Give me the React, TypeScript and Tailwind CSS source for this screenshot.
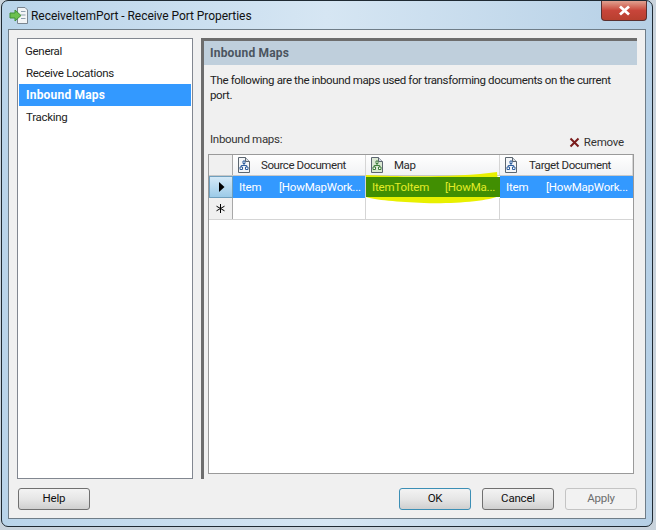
const ui = { fontFamily: 'Roboto, "Noto Sans", sans-serif' };

function DocIcon({ tone = 'blue' }: { tone?: 'blue' | 'green' }) {
  const c = tone === 'blue' ? '#2f5f9e' : '#3f7f3a';
  const paper = tone === 'blue' ? '#f4f6f8' : '#dbe8d4';
  return (
    <svg width="13" height="16" viewBox="0 0 13 16" className="shrink-0">
      <path d="M1.500 .5H8.500L12.500 4.500V15.500H1.500Z" fill={paper} stroke="#5c6670" />
      <path d="M8.500 .5V4.500H12.500" fill="#d5dbe2" stroke="#5c6670" />
      <path d="M6 4H8V6.500H6ZM3 10H5.500V12.500H3ZM8.500 10H11V12.500H8.500Z" fill="#fff" stroke={c} />
      <path d="M7 6.500V8.500M4.200 10V8.500H9.700V10" fill="none" stroke={c} />
    </svg>
  );
}

function HeaderCell({ label, tone, w, textLeft }: { label: string; tone?: 'blue' | 'green'; w: string; textLeft: string }) {
  return (
    <div className={`flex h-full items-center border-r border-[#d5d5d5] pl-[4px] ${w}`}>
      <DocIcon tone={tone} />
      <span className={`${textLeft} mt-[2px] text-[11.5px] tracking-[-0.42px] text-[#2a2a2a]`}>{label}</span>
    </div>
  );
}

function Btn({ label, kind }: { label: string; kind?: 'default' | 'disabled' }) {
  const tone =
    kind === 'disabled'
      ? 'border-[#c4c4c4] bg-[#f2f2f2] text-[#6d6d6d]'
      : kind === 'default'
        ? 'border-[#3c8fb5] bg-gradient-to-b from-[#f3f3f3] via-[#e6e6e6] to-[#cfcfcf] text-[#111]'
        : 'border-[#707070] bg-gradient-to-b from-[#f3f3f3] via-[#e6e6e6] to-[#cfcfcf] text-[#111]';
  return (
    <div className={`flex h-[22px] w-[72px] items-center justify-center rounded-[3px] border text-[11.5px] tracking-[-0.2px] ${tone}`}>
      {label}
    </div>
  );
}

export default function App() {
  return (
    <div className="h-[530px] w-[656px] overflow-hidden bg-[#c9d3dc]" style={ui}>
      <div className="mr-[3px] ml-[1px] flex h-[527px] flex-col rounded-[7px] border border-[#1f2a33] bg-gradient-to-r from-[#b9d4ea] via-[#d6e6f3] to-[#b6d0e6] px-[6px]">
        {/* title bar */}
        <div className="flex h-[28px] shrink-0 items-center pl-[1px]">
          <svg width="19" height="17" viewBox="0 0 19 17" className="shrink-0">
            <path d="M8.500 .5H16L18.500 3V16.500H8.500Z" fill="#f2f4f6" stroke="#7a8590" />
            <path d="M12 4.500H16.500M12 8H16.500M12 11.500H16.500" stroke="#8fa0b0" />
            <path d="M1 6H6V3L12 8.500L6 14V11H1Z" fill="#6cc04f" stroke="#3f8f38" />
          </svg>
          <span className="mt-[2px] ml-[3px] text-[12px] tracking-[-0.05px] text-[#111]">ReceiveItemPort - Receive Port Properties</span>
          <div className="mt-[-9px] mr-[-1px] ml-auto flex h-[20px] w-[46px] items-center justify-center rounded-b-[4px] border border-t-0 border-[#5a3030] bg-gradient-to-b from-[#e0a090] via-[#c8453a] to-[#b8402f]">
            <svg width="13" height="11" viewBox="0 0 13 11">
              <path d="M2 1.500L11 9.500M11 1.500L2 9.500" stroke="#fff" strokeWidth="2.800" />
            </svg>
          </div>
        </div>

        {/* client area */}
        <div className="flex h-[490px] shrink-0 flex-col border border-[#6f7d88] bg-[#f0f0f0] pt-[8px] pr-[8px] pl-[8px]">
          <div className="flex h-[441px] shrink-0">
            <div className="h-full w-[176px] shrink-0 border border-[#828790] bg-white pt-[1px] pl-[1px] text-[11.5px] tracking-[-0.3px] text-[#222]">
              <div className="flex h-[22px] items-center pt-[1px] pl-[6px]">General</div>
              <div className="flex h-[22px] items-center pt-[1px] pl-[7px]">Receive Locations</div>
              <div className="mr-[1px] flex h-[22px] items-center bg-[#3399ff] pl-[7px] text-[12px] font-bold tracking-[0.2px] text-white">Inbound Maps</div>
              <div className="flex h-[22px] items-center pt-[1px] pl-[7px]">Tracking</div>
            </div>

            <div className="ml-[8px] flex h-full w-[436px] shrink-0 flex-col border-t-[3px] border-l-[3px] border-t-[#6d6d6d] border-l-[#6d6d6d]">
              <div className="flex h-[24px] shrink-0 items-center bg-[#bfcfdc] pl-[6px] text-[12px] font-bold tracking-[0.2px] text-[#4b5560]">Inbound Maps</div>
              <div className="mt-[8px] ml-[6px] h-[34px] w-[410px] text-[11.5px] leading-[15px] tracking-[-0.38px] text-[#222]">
                The following are the inbound maps used for transforming documents on the current port.
              </div>
              <div className="mt-[22px] flex h-[22px] items-end justify-between pr-[13px] pl-[6px] text-[11.5px] tracking-[-0.2px] text-[#333]">
                <span className="mb-[3px] tracking-[-0.3px]">Inbound maps:</span>
                <span className="flex items-center gap-[4px]">
                  <svg width="11" height="11" viewBox="0 0 11 11">
                    <path d="M1.500 1.500L9.500 9.500M9.500 1.500L1.500 9.500" stroke="#7a1c1c" strokeWidth="2" />
                  </svg>
                  Remove
                </span>
              </div>

              {/* grid */}
              <div className="relative mt-[3px] ml-[4px] h-[320px] w-[426px] border border-[#9a9a9a] bg-white">
                <div className="flex h-[21px] border-b border-[#c8c8c8] bg-gradient-to-b from-white to-[#f1f2f4]">
                  <div className="h-full w-[24px] shrink-0 border-r border-[#a8a8a8] bg-[#f0f0f0]" />
                  <HeaderCell label="Source Document" w="w-[133px]" textLeft="ml-[11px]" />
                  <HeaderCell label="Map" tone="green" w="w-[134px]" textLeft="ml-[11px]" />
                  <HeaderCell label="Target Document" w="w-[133px]" textLeft="ml-[12px]" />
                </div>
                <div className="flex h-[22px] text-[11.5px] tracking-[-0.2px]">
                  <div className="flex w-[24px] shrink-0 items-center justify-center border border-[#6f9fbd] bg-gradient-to-b from-[#d4e9f7] to-[#9ccbe8]">
                    <svg width="7" height="10" viewBox="0 0 7 10"><path d="M1 0L6.500 5L1 10Z" fill="#000" /></svg>
                  </div>
                  <div className="flex w-[133px] items-center border-r border-[#d5d5d5] bg-[#3399ff] pt-[1px] pl-[6px] text-white">
                    <span className="w-[40px] shrink-0">Item</span>
                    <span>[HowMapWork...</span>
                  </div>
                  <div className="relative z-10 my-[1px] flex w-[134px] items-center bg-[#418f02] pt-[1px] pl-[6px] text-[#e3ec28]">
                    <span className="w-[73px] shrink-0">ItemToItem</span>
                    <span>[HowMa...</span>
                  </div>
                  <div className="flex w-[133px] items-center bg-[#3399ff] pt-[1px] pl-[6px] text-white">
                    <span className="w-[40px] shrink-0">Item</span>
                    <span>[HowMapWork...</span>
                  </div>
                </div>
                <div className="flex h-[22px] border-b border-[#d5d5d5]">
                  <div className="flex w-[24px] shrink-0 items-center justify-center border-r border-[#a8a8a8] bg-[#f0f0f0]">
                    <svg width="11" height="11" viewBox="0 0 11 11">
                      <path d="M5.500 1V10M1.500 3.200L9.500 7.800M9.500 3.200L1.500 7.800" stroke="#000" />
                    </svg>
                  </div>
                  <div className="w-[133px] border-r border-[#d5d5d5]" />
                  <div className="w-[134px] border-r border-[#d5d5d5]" />
                  <div className="w-[133px]" />
                </div>
                {/* highlighter stroke over the Map cell */}
                <svg width="140" height="36" viewBox="0 0 140 36" className="absolute top-[17px] left-[155px]">
                  <path d="M2 3C40 5 100 5 133 0L135 24C125 29 90 32 60 31C35 30 10 28 2 25Z" fill="#e8f000" />
                </svg>
              </div>
            </div>
          </div>

          {/* footer buttons */}
          <div className="mt-[9px] flex items-center pl-[1px]">
            <Btn label="Help" />
            <div className="ml-auto flex gap-[11px]">
              <Btn label="OK" kind="default" />
              <Btn label="Cancel" />
              <Btn label="Apply" kind="disabled" />
            </div>
          </div>
        </div>
      </div>
    </div>
  );
}
